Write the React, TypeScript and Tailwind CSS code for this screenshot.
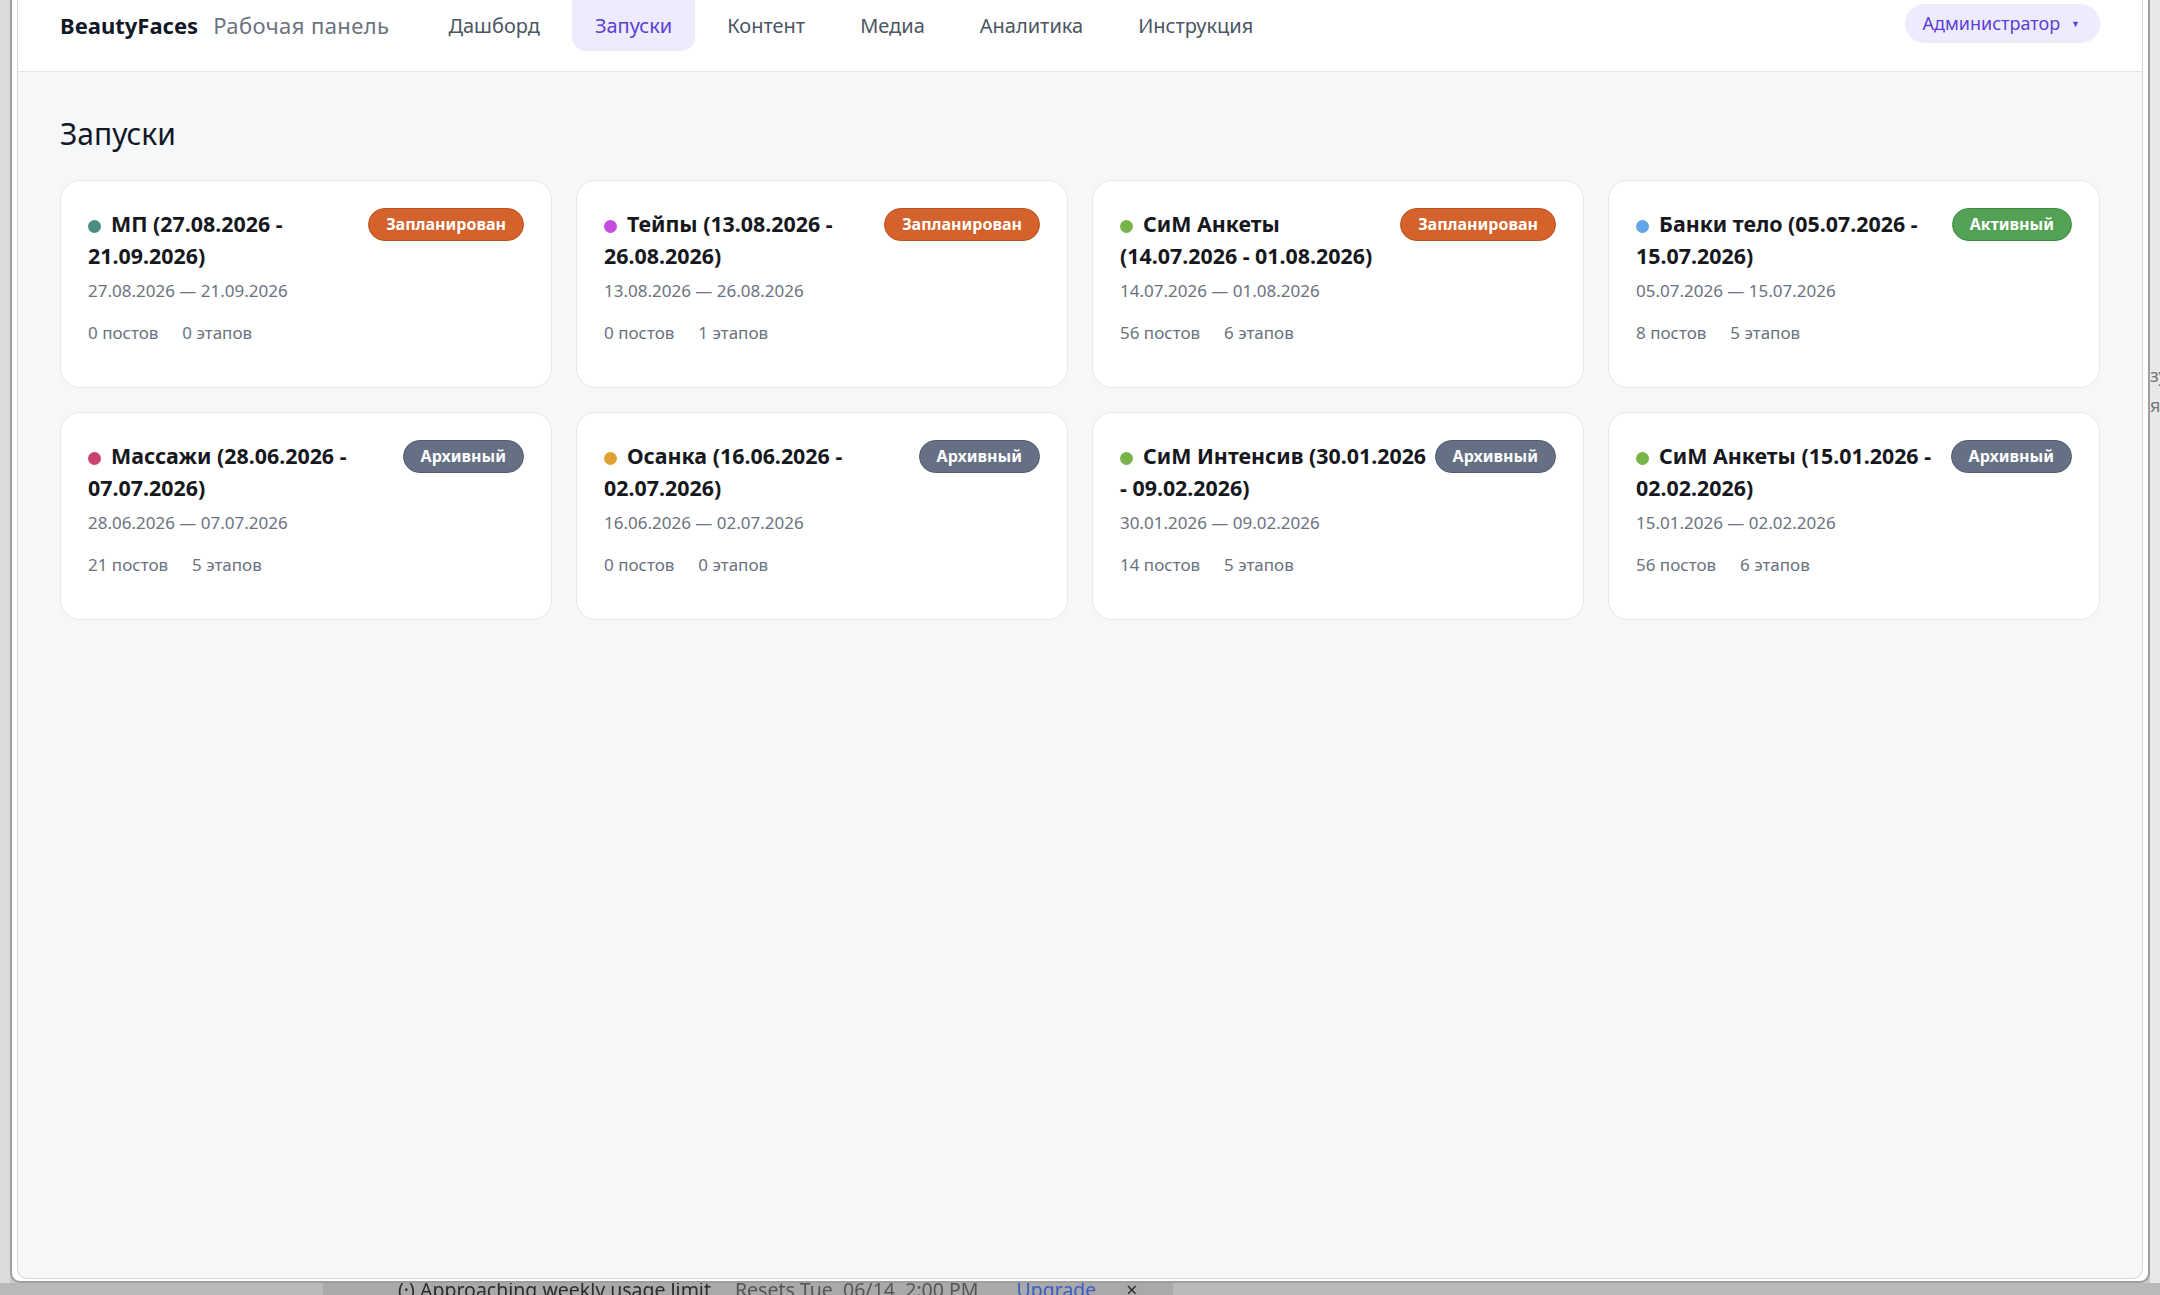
type Status = "planned" | "active" | "archived";

type Launch = {
  line1: string;
  line2: string;
  dates: string;
  posts: number;
  stages: number;
  dot: string;
  status: Status;
};

const launches: Launch[] = [
  { line1: "МП (27.08.2026 -", line2: "21.09.2026)", dates: "27.08.2026 — 21.09.2026", posts: 0, stages: 0, dot: "bg-[#4a8c80]", status: "planned" },
  { line1: "Тейпы (13.08.2026 -", line2: "26.08.2026)", dates: "13.08.2026 — 26.08.2026", posts: 0, stages: 1, dot: "bg-[#c44de0]", status: "planned" },
  { line1: "СиМ Анкеты", line2: "(14.07.2026 - 01.08.2026)", dates: "14.07.2026 — 01.08.2026", posts: 56, stages: 6, dot: "bg-[#77b54a]", status: "planned" },
  { line1: "Банки тело (05.07.2026 -", line2: "15.07.2026)", dates: "05.07.2026 — 15.07.2026", posts: 8, stages: 5, dot: "bg-[#62a6e6]", status: "active" },
  { line1: "Массажи (28.06.2026 -", line2: "07.07.2026)", dates: "28.06.2026 — 07.07.2026", posts: 21, stages: 5, dot: "bg-[#c8436f]", status: "archived" },
  { line1: "Осанка (16.06.2026 -", line2: "02.07.2026)", dates: "16.06.2026 — 02.07.2026", posts: 0, stages: 0, dot: "bg-[#e0a131]", status: "archived" },
  { line1: "СиМ Интенсив (30.01.2026", line2: "- 09.02.2026)", dates: "30.01.2026 — 09.02.2026", posts: 14, stages: 5, dot: "bg-[#77b54a]", status: "archived" },
  { line1: "СиМ Анкеты (15.01.2026 -", line2: "02.02.2026)", dates: "15.01.2026 — 02.02.2026", posts: 56, stages: 6, dot: "bg-[#77b54a]", status: "archived" },
];

const statusStyle: Record<Status, { label: string; cls: string }> = {
  planned: { label: "Запланирован", cls: "bg-[#d3622c] border-[#b9521f]" },
  active: { label: "Активный", cls: "bg-[#53a154] border-[#3f8a40]" },
  archived: { label: "Архивный", cls: "bg-[#667085] border-[#525b6e]" },
};

const navItems = ["Дашборд", "Запуски", "Контент", "Медиа", "Аналитика", "Инструкция"];

function LaunchCard({ item }: { item: Launch }) {
  const st = statusStyle[item.status];
  return (
    <div className="h-[208px] rounded-[20px] border border-[#e6e8ec] bg-white px-[27px] pt-[27px]">
      <div className="flex items-start justify-between gap-4">
        <div className="min-w-0 flex-1 text-[21.4px] font-bold leading-[32px] text-[#16181d] whitespace-nowrap">
          <span className={`mr-[10px] inline-block h-[13px] w-[13px] rounded-full align-[-1px] ${item.dot}`} />
          {item.line1}
          <br />
          {item.line2}
        </div>
        <span className={`shrink-0 rounded-full border px-[17px] text-[16px] font-bold leading-[31px] text-white ${st.cls}`}>
          {st.label}
        </span>
      </div>
      <div className="mt-[6px] text-[17px] leading-[26px] text-[#6b7280]">{item.dates}</div>
      <div className="mt-4 flex gap-6 text-[17px] leading-[26px] text-[#6b7280]">
        <span>{item.posts} постов</span>
        <span>{item.stages} этапов</span>
      </div>
    </div>
  );
}

export default function App() {
  return (
    <div className="h-[1295px] w-[2160px] overflow-hidden bg-[#c9c9c9] font-['Noto_Sans',sans-serif]">
      <div className="flex h-[1283px]">
        {/* left edge of screen */}
        <div className="w-[10px] shrink-0 bg-[#dcdcdc]" />

        {/* browser window */}
        <div className="flex w-[2140px] shrink-0 flex-col rounded-b-[10px] border-x-2 border-b-2 border-[#9e9e9e] bg-white px-[5px] pb-[2px]">
          <div className="flex flex-1 flex-col overflow-hidden rounded-b-[10px] border-x border-b border-[#d4d6da] bg-[#f6f7f9]">
            {/* header */}
            <header className="flex h-[72px] shrink-0 items-start border-b border-[#e4e6ea] bg-white px-[42px]">
              <div className="flex h-[51px] items-center gap-[15px]">
                <span className="text-[22px] font-bold text-[#111827]">BeautyFaces</span>
                <span className="text-[22px] tracking-[0.4px] text-[#6b7280]">Рабочая панель</span>
              </div>
              <nav className="ml-[36px] flex gap-[9px]">
                {navItems.map((n) => (
                  <span
                    key={n}
                    className={
                      n === "Запуски"
                        ? "flex h-[51px] items-center rounded-b-[14px] bg-[#eeebfd] px-[23px] text-[20px] text-[#5b3fd6]"
                        : "flex h-[51px] items-center px-[23px] text-[20px] text-[#4b5563]"
                    }
                  >
                    {n}
                  </span>
                ))}
              </nav>
              <div className="ml-auto mt-[4px] flex h-[39px] items-center gap-[11px] rounded-full bg-[#eeebfd] pl-[18px] pr-[20px] text-[18px] text-[#5b3fd6]">
                Администратор
                <span className="text-[9px] leading-none">▼</span>
              </div>
            </header>

            {/* content */}
            <main className="flex-1 px-[42px] pt-[44px]">
              <h1 className="mb-[28px] text-[30px] leading-[36px] text-[#111827]">Запуски</h1>
              <div className="grid grid-cols-4 gap-6">
                {launches.map((l, i) => (
                  <LaunchCard key={i} item={l} />
                ))}
              </div>
            </main>
          </div>
        </div>

        {/* window behind, on the right */}
        <div className="flex w-[10px] shrink-0 flex-col overflow-hidden bg-[#e8e8e8] pt-[360px] text-[18px] leading-[30px] text-[#777]">
          <span className="whitespace-nowrap">зу</span>
          <span className="whitespace-nowrap">я</span>
        </div>
      </div>

      {/* notification bar behind the window */}
      <div className="flex h-[12px] overflow-hidden bg-[#b9b9b9]">
        <div className="ml-[323px] -mt-[8px] flex h-[30px] w-[850px] items-center whitespace-nowrap bg-[#a9a9a9] px-[75px] text-[19.5px] text-[#2b2b2b] blur-[0.6px]">
          <span>(·) Approaching weekly usage limit</span>
          <span className="ml-[24px] text-[#555]">Resets Tue, 06/14, 2:00 PM</span>
          <span className="ml-[38px] text-[#3b5cc4]">Upgrade</span>
          <span className="ml-[30px]">×</span>
        </div>
      </div>
    </div>
  );
}
